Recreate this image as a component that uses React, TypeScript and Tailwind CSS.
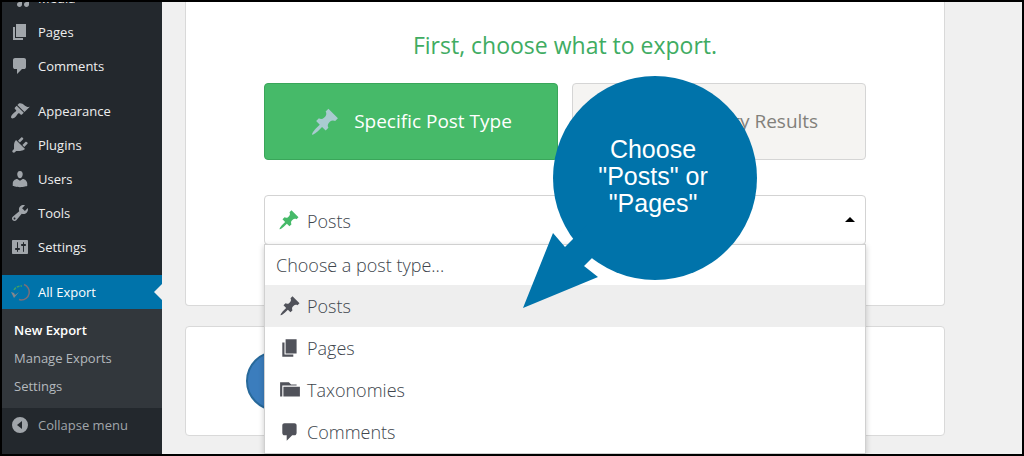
import { useState } from "react";
import { FaWordpress } from "react-icons/fa";

const icons = {
  media:
    "M13 11V4c0-.55-.45-1-1-1h-1.67L9 1H5L3.67 3H2c-.55 0-1 .45-1 1v7c0 .55.45 1 1 1h10c.55 0 1-.45 1-1zM7 4.5c1.38 0 2.5 1.12 2.5 2.5S8.38 9.5 7 9.5 4.5 8.38 4.5 7 5.62 4.5 7 4.5zM14 6h5v10.5c0 1.38-1.12 2.5-2.5 2.5S14 17.88 14 16.5s1.12-2.5 2.5-2.5c.17 0 .34.02.5.05V9h-3V6zm-4 8.05V13h2v3.5c0 1.38-1.12 2.5-2.5 2.5S7 17.88 7 16.5 8.12 14 9.5 14c.17 0 .34.02.5.05z",
  post: "M10.44 3.02l1.82-1.82 6.36 6.35-1.83 1.82c-1.05-.68-2.48-.57-3.41.36l-.75.75c-.92.93-1.04 2.35-.35 3.41l-1.83 1.82-2.41-2.41-2.8 2.79c-.42.42-3.38 2.71-3.8 2.29s1.86-3.39 2.28-3.81l2.79-2.79L4.1 9.36l1.83-1.82c1.05.69 2.48.57 3.4-.36l.75-.75c.93-.92 1.05-2.35.36-3.41z",
  page: "M6 15V2h10v13H6zm-1 1h8v2H3V5h2v11z",
  comments:
    "M5 2h9q.82 0 1.41.59T16 4v7q0 .82-.59 1.41T14 13h-2l-5 5v-5H5q-.82 0-1.41-.59T3 11V4q0-.82.59-1.41T5 2z",
  appearance:
    "M14.48 11.06L7.41 3.99l1.5-1.5c.5-.56 2.3-.47 3.51.32 1.21.8 1.43 1.28 2.91 2.1 1.18.64 2.45 1.26 4.45.85zm-.71.71L6.7 4.7 4.93 6.47c-.39.39-.39 1.02 0 1.41l1.06 1.06c.39.39.39 1.03 0 1.42-.6.6-1.43 1.11-2.21 1.69-.35.26-.7.53-1.01.84C1.43 14.23.4 16.08 1.4 17.07c.99 1 2.84-.03 4.18-1.36.31-.31.58-.66.85-1.02.57-.78 1.08-1.61 1.69-2.21.39-.39 1.02-.39 1.41 0l1.06 1.06c.39.39 1.02.39 1.41 0z",
  plugins:
    "M13.11 4.36L9.87 7.6 8 5.73l3.24-3.24c.35-.34 1.05-.2 1.56.32.52.51.66 1.21.31 1.55zm-8 1.77l.91-1.12 9.01 9.01-1.19.84c-.71.71-2.63 1.16-3.82 1.16H6.14L4.9 17.26c-.59.59-1.54.59-2.12 0-.59-.58-.59-1.53 0-2.12l1.24-1.24v-3.88c0-1.13.4-3.19 1.09-3.89zm7.26 3.97l3.24-3.24c.34-.35 1.04-.21 1.55.31.52.51.66 1.21.31 1.55l-3.24 3.25z",
  users:
    "M10 9.25c-2.27 0-2.73-3.44-2.73-3.44C7 4.02 7.82 2 9.97 2c2.16 0 2.98 2.02 2.71 3.81 0 0-.41 3.44-2.68 3.44zm0 2.57L12.72 10c2.39 0 4.52 2.33 4.52 4.53v2.49s-3.65 1.13-7.24 1.13c-3.65 0-7.24-1.13-7.24-1.13v-2.49c0-2.25 1.94-4.48 4.47-4.48z",
  tools:
    "M16.68 9.77c-1.34 1.34-3.3 1.67-4.95.99l-5.41 6.52c-.99.99-2.59.99-3.58 0s-.99-2.59 0-3.57l6.52-5.42c-.68-1.65-.35-3.61.99-4.95 1.28-1.28 3.12-1.62 4.72-1.06l-2.89 2.89 2.82 2.82 2.86-2.87c.53 1.58.18 3.39-1.08 4.65zM3.81 16.21c.4.39 1.04.39 1.43 0 .4-.4.4-1.04 0-1.43-.39-.4-1.03-.4-1.43 0-.39.39-.39 1.03 0 1.43z",
  settings:
    "M18 16V4c0-.55-.45-1-1-1H3c-.55 0-1 .45-1 1v12c0 .55.45 1 1 1h14c.55 0 1-.45 1-1zM8 11h1c.55 0 1 .45 1 1s-.45 1-1 1H8v1.5c0 .28-.22.5-.5.5s-.5-.22-.5-.5V13H6c-.55 0-1-.45-1-1s.45-1 1-1h1V5.5c0-.28.22-.5.5-.5s.5.22.5.5V11zm5-2h-1c-.55 0-1-.45-1-1s.45-1 1-1h1V5.5c0-.28.22-.5.5-.5s.5.22.5.5V7h1c.55 0 1 .45 1 1s-.45 1-1 1h-1v5.5c0 .28-.22.5-.5.5s-.5-.22-.5-.5V9z",
  taxonomy: "M1 16V3h8l2 2h5v1H3v10zM4 7h15v9H4z",
  collapse: "M10 2a8 8 0 1 0 0 16 8 8 0 0 0 0-16zm2 4v8l-5-4z",
};

type IconName = keyof typeof icons;

function Icon({ name, className }: { name: IconName; className: string }) {
  return (
    <svg viewBox="0 0 20 20" fill="currentColor" fillRule="evenodd" className={className} aria-hidden="true">
      <path d={icons[name]} />
    </svg>
  );
}

const menuTop: { label: string; icon: IconName }[] = [
  { label: "Media", icon: "media" },
  { label: "Pages", icon: "page" },
  { label: "Comments", icon: "comments" },
];

const menuBottom: { label: string; icon: IconName }[] = [
  { label: "Appearance", icon: "appearance" },
  { label: "Plugins", icon: "plugins" },
  { label: "Users", icon: "users" },
  { label: "Tools", icon: "tools" },
  { label: "Settings", icon: "settings" },
];

const postTypes: { label: string; icon: IconName }[] = [
  { label: "Posts", icon: "post" },
  { label: "Pages", icon: "page" },
  { label: "Taxonomies", icon: "taxonomy" },
  { label: "Comments", icon: "comments" },
];

function MenuItem({ label, icon }: { label: string; icon: IconName }) {
  return (
    <li>
      <a href="#" className="flex h-[34px] items-center gap-2 pl-2 text-[#eeeeee] hover:text-[#00b9eb]">
        <Icon name={icon} className="size-5 text-[#a0a5aa]" />
        <span className="pt-0.5">{label}</span>
      </a>
    </li>
  );
}

function Sidebar() {
  return (
    <nav className="w-40 shrink-0 overflow-hidden bg-[#23282d] text-[13px]">
      {/* scrolled a little, so the first item is cut off */}
      <ul className="-mt-[21px]">
        {menuTop.map((item) => (
          <MenuItem key={item.label} {...item} />
        ))}
      </ul>
      <ul className="mt-[11px]">
        {menuBottom.map((item) => (
          <MenuItem key={item.label} {...item} />
        ))}
      </ul>

      <a href="#" className="mt-[11px] flex h-[34px] items-center gap-2 bg-[#0073aa] pl-2 text-white">
        <svg viewBox="0 0 20 20" fill="none" className="size-5" aria-hidden="true">
          <path d="M14 2.500a8 8 0 0 1-3 15.500l-2-.5" stroke="#7b6f78" strokeWidth="1.500" />
          <path d="M4 8q2-4 8-4" stroke="#3fa065" strokeWidth="1.500" strokeDasharray="3 1" />
          <path d="M1 10l3 1 1 2 4-3-5 6z" fill="#85878c" />
        </svg>
        <span className="flex-1 pt-0.5">All Export</span>
        <span className="h-0 w-0 border-y-8 border-r-8 border-y-transparent border-r-[#f0f0f0]" />
      </a>
      <ul className="bg-[#32373c] pt-2 pb-[7px] text-[#b4b9be]">
        <li>
          <a href="#" className="flex h-7 items-center px-3 font-semibold text-white">
            New Export
          </a>
        </li>
        <li>
          <a href="#" className="flex h-7 items-center px-3">Manage Exports</a>
        </li>
        <li>
          <a href="#" className="flex h-7 items-center px-3">Settings</a>
        </li>
      </ul>

      <button type="button" className="flex h-[34px] w-full items-center gap-2 pl-2 text-[#a0a5aa]">
        <Icon name="collapse" className="size-5" />
        <span className="pt-0.5">Collapse menu</span>
      </button>
    </nav>
  );
}

function Callout() {
  return (
    <div className="pointer-events-none absolute top-[46px] left-[259px] z-20 h-[232px] w-[234px]">
      <svg viewBox="0 0 234 232" fill="#0073aa" className="size-full" aria-hidden="true">
        <circle cx="132" cy="102" r="102" />
        <path d="M0 232l30-75 12 14 22-22 20 18-23 23 14 11z" />
      </svg>
      <p className="absolute top-[60px] left-[30px] w-50 text-center font-['Liberation_Sans',sans-serif] text-[25px] leading-[27px] text-white">
        Choose
        <br />
        "Posts" or
        <br />
        "Pages"
      </p>
    </div>
  );
}

export default function App() {
  const [type, setType] = useState("Posts");

  return (
    <div className="flex h-screen overflow-hidden border-2 border-black bg-[#f0f0f0] font-['Open_Sans',sans-serif]">
      <Sidebar />

      <main className="min-w-0 flex-1 pr-5 pl-[23px]">
        {/* EXPORT TYPE */}
        <section className="max-w-[760px] rounded-b border border-t-0 border-[#d9d9d9] bg-white px-5 pt-7 pb-[60px]">
          <div className="relative mx-auto max-w-[602px]">
            <h1 className="text-center text-[23px] leading-[30px] text-[#40ac62]">
              First, choose what to export.
            </h1>

            <div className="mt-[23px] grid grid-cols-2 gap-[14px] text-[19px]">
              <button
                type="button"
                className="flex h-[77px] items-center justify-center gap-[14px] rounded border border-[#3aa65a] bg-[#46ba69] text-white"
              >
                <Icon name="post" className="size-[30px] text-[#a9cbd0]" />
                Specific Post Type
              </button>
              <button
                type="button"
                className="flex h-[77px] items-center justify-center gap-[14px] rounded border border-[#d5d5d5] bg-[#f5f4f2] text-[#82807b]"
              >
                <FaWordpress className="size-6" />
                WP_Query Results
              </button>
            </div>

            <div className="relative mt-[35px]">
              <select
                aria-label="Post type"
                value={type}
                onChange={(e) => setType(e.target.value)}
                className="block h-[50px] w-full appearance-none rounded border border-[#d3d3d3] bg-white pt-0.5 pl-[42px] text-lg font-light text-[#40464d]"
              >
                {postTypes.map((t) => (
                  <option key={t.label}>{t.label}</option>
                ))}
              </select>
              <Icon name="post" className="pointer-events-none absolute top-[14px] left-[14px] size-[22px] text-[#46ba69]" />
              <span className="pointer-events-none absolute top-[22px] right-[11px] border-x-[5px] border-b-[5px] border-x-transparent border-b-black" />

              <ul
                role="listbox"
                aria-label="Post types"
                className="absolute inset-x-0 top-[49px] z-10 border border-[#d0d0d0] bg-white text-lg font-light text-[#40464d] shadow-[0_2px_6px_rgba(0,0,0,0.2)]"
              >
                <li role="option" aria-selected={false} className="flex h-10 items-center px-[11px]">
                  Choose a post type...
                </li>
                {postTypes.map((t) => (
                  <li
                    key={t.label}
                    role="option"
                    aria-selected={t.label === type}
                    onClick={() => setType(t.label)}
                    className="flex h-[42px] items-center gap-[6px] px-[14px] aria-selected:bg-[#eeeeee]"
                  >
                    <Icon name={t.icon} className="size-[22px] text-[#50525a]" />
                    {t.label}
                  </li>
                ))}
              </ul>
            </div>

            <Callout />
          </div>
        </section>

        {/* PROMO */}
        <section className="mt-5 flex h-[110px] max-w-[760px] items-center rounded border border-[#d9d9d9] bg-white px-[60px]">
          <div className="size-[60px] rounded-full border-2 border-[#28699a] bg-[#3b7dbd]" />
        </section>
      </main>
    </div>
  );
}
